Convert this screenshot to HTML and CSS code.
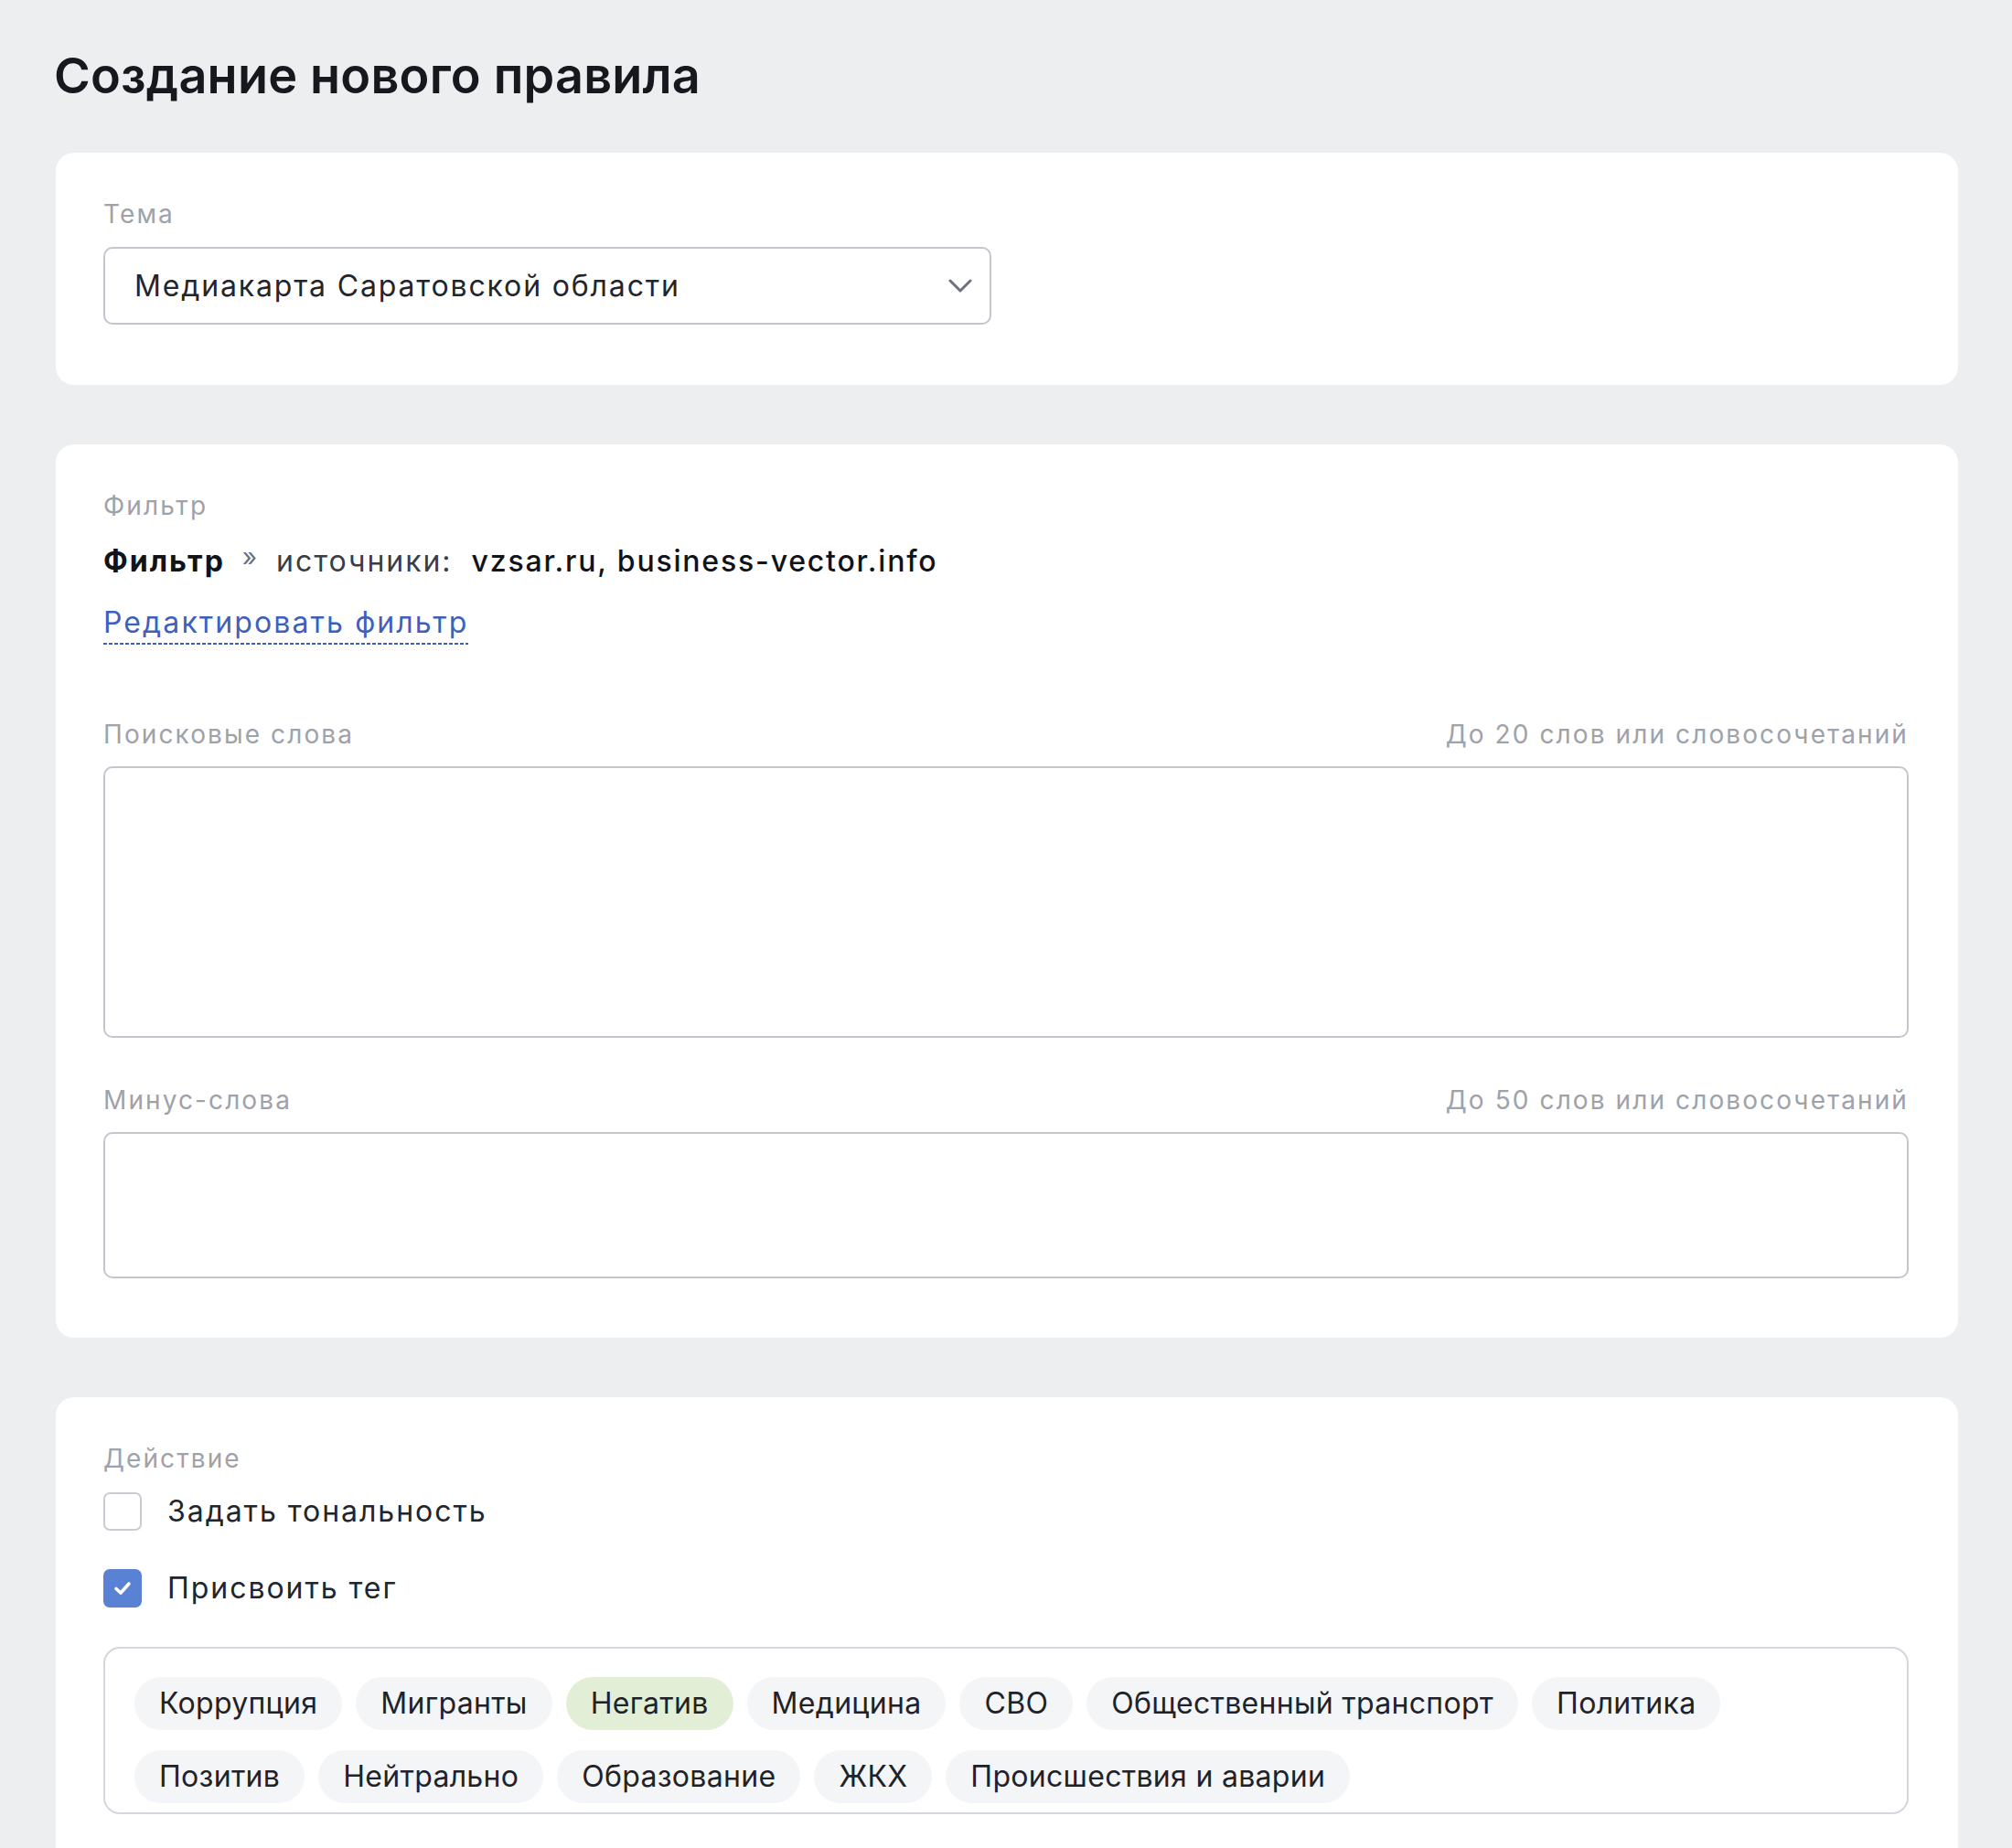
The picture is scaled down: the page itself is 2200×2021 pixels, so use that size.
FILE: index.html
```html
<!DOCTYPE html>
<html lang="ru">
<head>
<meta charset="utf-8">
<title>Создание нового правила</title>
<link rel="stylesheet" href="styles.css">
</head>
<body>
<div class="page">
  <h1 class="page-title">Создание нового правила</h1>

  <section class="card card-theme">
    <div class="label">Тема</div>
    <div class="select">
      <span class="select-value">Медиакарта Саратовской области</span>
      <svg class="chevron" width="26" height="16" viewBox="0 0 26 16"><polyline points="2,2 13,13 24,2" fill="none" stroke="#6d727e" stroke-width="3" stroke-linecap="round" stroke-linejoin="round"/></svg>
    </div>
  </section>

  <section class="card card-filter">
    <div class="label">Фильтр</div>
    <div class="filter-line">
      <span class="filter-name">Фильтр</span>
      <span class="filter-sep">»</span>
      <span class="filter-key">источники:</span>
      <span class="filter-val">vzsar.ru, business-vector.info</span>
    </div>
    <div class="edit-row"><a class="edit-link" href="#">Редактировать фильтр</a></div>

    <div class="field-head field-head-first">
      <span class="label">Поисковые слова</span>
      <span class="label">До 20 слов или словосочетаний</span>
    </div>
    <div class="textarea textarea-big"></div>

    <div class="field-head">
      <span class="label">Минус-слова</span>
      <span class="label">До 50 слов или словосочетаний</span>
    </div>
    <div class="textarea textarea-small"></div>
  </section>

  <section class="card card-action">
    <div class="label">Действие</div>
    <div class="check-row">
      <span class="checkbox"></span>
      <span class="check-text">Задать тональность</span>
    </div>
    <div class="check-row check-row-second">
      <span class="checkbox checkbox-on"><svg width="22" height="18" viewBox="0 0 22 18"><polyline points="4,9.5 9,14 18,4" fill="none" stroke="#fff" stroke-width="3.6" stroke-linecap="round" stroke-linejoin="round"/></svg></span>
      <span class="check-text">Присвоить тег</span>
    </div>
    <div class="tags">
      <div class="tag-row">
        <span class="tag">Коррупция</span>
        <span class="tag">Мигранты</span>
        <span class="tag tag-active">Негатив</span>
        <span class="tag">Медицина</span>
        <span class="tag">СВО</span>
        <span class="tag">Общественный транспорт</span>
        <span class="tag">Политика</span>
      </div>
      <div class="tag-row">
        <span class="tag">Позитив</span>
        <span class="tag">Нейтрально</span>
        <span class="tag">Образование</span>
        <span class="tag">ЖКХ</span>
        <span class="tag">Происшествия и аварии</span>
      </div>
    </div>
  </section>
</div>
</body>
</html>
```

FILE: styles.css
```css
html, body {
  margin: 0;
  padding: 0;
  background: #edeef0;
}

body {
  font-family: Inter, "Liberation Sans", sans-serif;
  color: #1d2027;
}

.page {
  padding: 51px 59px 0 61px;
}

.page-title {
  margin: 0 0 52px -2px;
  font-size: 54px;
  line-height: 64px;
  font-weight: 600;
  color: #16181d;
  letter-spacing: 0.2px;
}

.card {
  background: #fff;
  border-radius: 20px;
  padding: 50px 54px 66px 52px;
  margin-bottom: 65px;
}

.label {
  font-size: 28px;
  line-height: 34px;
  color: #9ea2aa;
  letter-spacing: 2.1px;
}

.select {
  margin-top: 19px;
  width: 971px;
  height: 85px;
  box-sizing: border-box;
  border: 2px solid #c3c6cd;
  border-radius: 10px;
  display: flex;
  align-items: center;
  justify-content: space-between;
  padding: 0 19px 0 32px;
}

.select-value {
  font-size: 32px;
  line-height: 40px;
  color: #22252c;
  letter-spacing: 1.85px;
}

.chevron {
  display: block;
}

.card-filter {
  padding-bottom: 65px;
}

.filter-line {
  margin-top: 24px;
  font-size: 32px;
  line-height: 40px;
  display: flex;
  align-items: baseline;
}

.filter-name {
  font-weight: 700;
  color: #111318;
  letter-spacing: 2px;
}

.filter-sep {
  color: #6b6f78;
  font-size: 28px;
  margin: 0 21px 0 19px;
  position: relative;
  top: -6px;
}

.filter-key {
  color: #3a3d45;
  margin-right: 21px;
  letter-spacing: 1.95px;
}

.filter-val {
  font-weight: 500;
  color: #111318;
  letter-spacing: 1.8px;
}

.edit-row {
  margin-top: 26px;
}

.edit-link {
  display: inline-block;
  font-size: 32px;
  line-height: 40px;
  padding-bottom: 4px;
  color: #3f5fbf;
  text-decoration: none;
  letter-spacing: 2.1px;
  background-image: linear-gradient(to right, #3f5fbf 60%, transparent 60%);
  background-size: 6px 2px;
  background-repeat: repeat-x;
  background-position: 0 100%;
}

.field-head {
  display: flex;
  justify-content: space-between;
  margin-top: 51px;
}

.field-head-first {
  margin-top: 81px;
}

.textarea {
  margin-top: 18px;
  box-sizing: border-box;
  border: 2px solid #c3c6cd;
  border-radius: 10px;
  background: #fff;
}

.textarea-big {
  height: 297px;
}

.textarea-small {
  height: 160px;
}

.check-row {
  margin-top: 20px;
  display: flex;
  align-items: center;
  gap: 28px;
  height: 42px;
}

.check-row-second {
  margin-top: 42px;
}

.checkbox {
  width: 42px;
  height: 42px;
  box-sizing: border-box;
  border: 2px solid #c9ccd2;
  border-radius: 7px;
  background: #fff;
  display: flex;
  align-items: center;
  justify-content: center;
  flex: none;
}

.checkbox-on {
  background: #5a82d4;
  border-color: #5a82d4;
}

.check-text {
  font-size: 32px;
  line-height: 40px;
  color: #22252c;
  letter-spacing: 1.95px;
}

.tags {
  margin-top: 43px;
  border: 2px solid #d3d6dc;
  border-radius: 18px;
  padding: 31px 32px 10px;
  display: flex;
  flex-direction: column;
  gap: 22px;
}

.tag-row {
  display: flex;
  gap: 15px;
}

.tag {
  height: 58px;
  box-sizing: border-box;
  padding: 0 27px;
  border-radius: 29px;
  background: #f4f5f7;
  font-size: 32px;
  line-height: 58px;
  color: #1f2229;
  white-space: nowrap;
  letter-spacing: 0.3px;
}

.tag-active {
  background: #e2efd6;
}
```
